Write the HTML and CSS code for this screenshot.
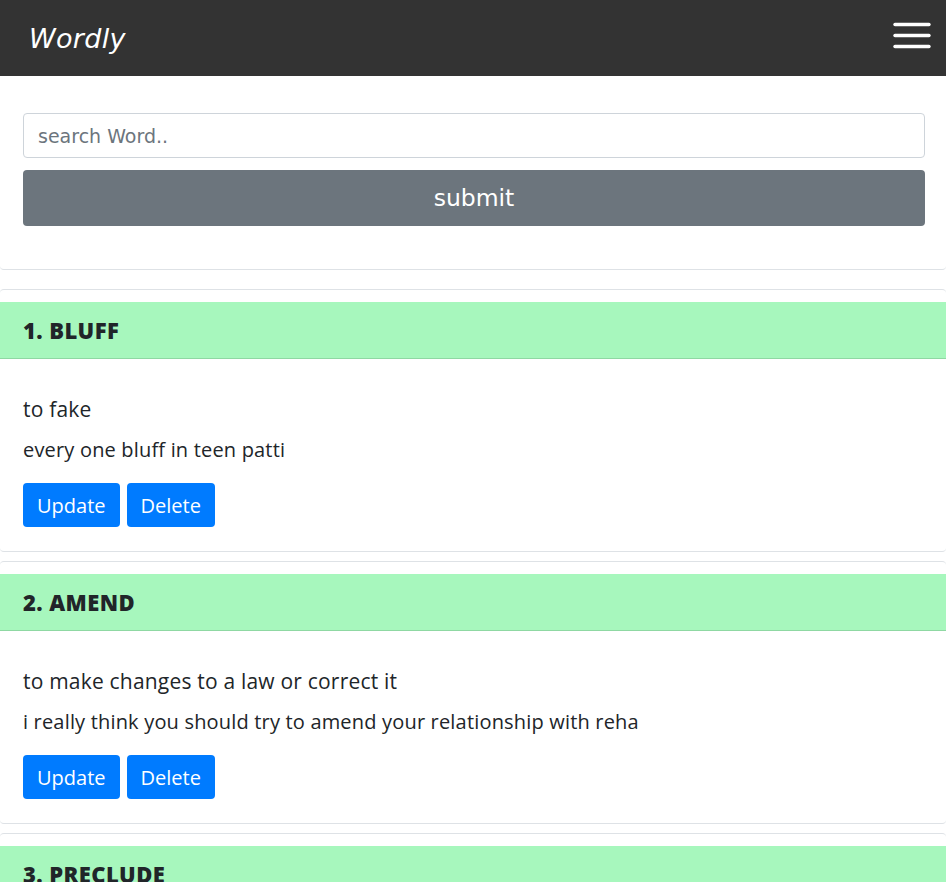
FILE: index.html
```html
<!DOCTYPE html>
<html>
<head>
<meta charset="utf-8">
<link rel="stylesheet" href="styles.css">
</head>
<body>
<nav class="navbar">
  <span class="brand">Wordly</span>
  <button class="toggler" aria-label="menu">
    <svg width="38" height="28" viewBox="0 0 38 28"><g stroke="#fff" stroke-width="3.4" stroke-linecap="round"><line x1="2" y1="2.5" x2="36" y2="2.5"/><line x1="2" y1="13.5" x2="36" y2="13.5"/><line x1="2" y1="24.5" x2="36" y2="24.5"/></g></svg>
  </button>
</nav>
<section class="search-card">
  <form class="search-form">
    <input class="search-input" type="text" placeholder="search Word..">
    <button class="submit-btn" type="button">submit</button>
  </form>
</section>
<div class="words">
  <article class="word-card">
    <h3 class="word-title">1. BLUFF</h3>
    <div class="word-body">
      <p class="meaning">to fake</p>
      <p class="example">every one bluff in teen patti</p>
      <div class="actions"><button class="btn">Update</button><button class="btn">Delete</button></div>
    </div>
  </article>
  <article class="word-card">
    <h3 class="word-title">2. AMEND</h3>
    <div class="word-body">
      <p class="meaning">to make changes to a law or correct it</p>
      <p class="example">i really think you should try to amend your relationship with reha</p>
      <div class="actions"><button class="btn">Update</button><button class="btn">Delete</button></div>
    </div>
  </article>
  <article class="word-card">
    <h3 class="word-title">3. PRECLUDE</h3>
    <div class="word-body">
      <p class="meaning">to prevent something from happening</p>
      <p class="example">the rain precluded the match</p>
      <div class="actions"><button class="btn">Update</button><button class="btn">Delete</button></div>
    </div>
  </article>
</div>
</body>
</html>
```
FILE: styles.css
```css
* { box-sizing: border-box; }
html, body { margin: 0; padding: 0; }
body {
  font-family: "Open Sans", "Noto Sans", "DejaVu Sans", sans-serif;
  color: #212529;
  background: #fff;
  overflow: hidden;
}
.navbar {
  height: 76px;
  background: #333333;
  display: flex;
  align-items: center;
  justify-content: space-between;
  padding: 0 15px 0 29px;
}
.brand {
  font-family: "DejaVu Sans", sans-serif;
  font-style: italic;
  font-size: 27px;
  color: #fff;
  letter-spacing: 0.3px;
}
.toggler {
  background: none;
  border: 0;
  padding: 0;
  display: flex;
  margin-top: -4px;
}
.search-card {
  border-bottom: 1px solid #dee2e6;
  border-radius: 0 0 4px 4px;
  padding: 37px 21px 43px 23px;
}
.search-form {
  display: flex;
  flex-direction: column;
  gap: 12px;
}
.search-input {
  height: 45px;
  border: 1px solid #ced4da;
  border-radius: 4px;
  padding: 0 14px;
  font-family: "DejaVu Sans", sans-serif;
  font-size: 19px;
  color: #495057;
}
.search-input::placeholder { color: #6c757d; }
.submit-btn {
  height: 56px;
  background: #6c757d;
  color: #fff;
  border: 0;
  border-radius: 4px;
  font-family: "DejaVu Sans", sans-serif;
  font-size: 23.5px;
}
.words {
  display: flex;
  flex-direction: column;
  gap: 9px;
  margin-top: 19px;
}
.word-card {
  border-top: 1px solid #dee2e6;
  border-bottom: 1px solid #dee2e6;
  border-radius: 4px;
  padding-top: 12px;
}
.word-title {
  margin: 0;
  height: 57px;
  background: #a7f7bd;
  border-bottom: 1px solid #8fd8a3;
  padding-left: 23px;
  display: flex;
  align-items: center;
  font-family: "Open Sans", sans-serif;
  font-weight: 800;
  font-size: 22px;
  letter-spacing: 0.4px;
  color: #212529;
}
.word-body {
  padding: 37px 23px 24px;
}
.meaning {
  margin: 0 0 14px;
  font-size: 21px;
  letter-spacing: 0.2px;
  line-height: 26px;
}
.example {
  margin: 0 0 19px;
  font-size: 20px;
  letter-spacing: 0.18px;
  line-height: 28px;
}
.actions {
  display: flex;
  gap: 7px;
}
.btn {
  height: 44px;
  padding: 0 14px;
  background: #007bff;
  color: #fff;
  border: 0;
  border-radius: 4px;
  font-family: "Open Sans", sans-serif;
  font-size: 20px;
}
```
